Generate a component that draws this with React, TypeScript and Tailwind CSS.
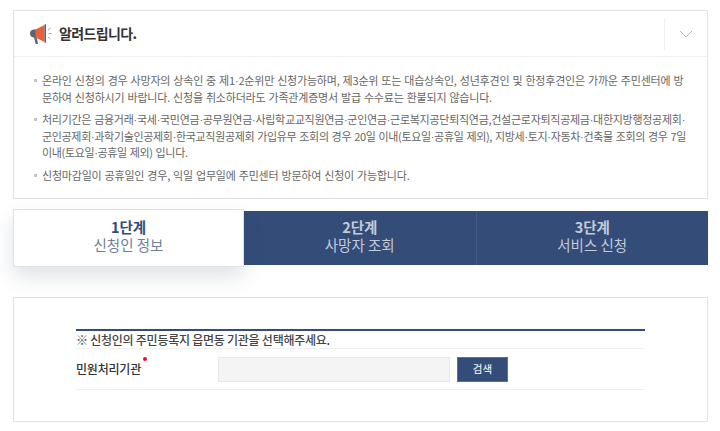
import React from 'react';

// broken by hand so each line ends on the same word as the original
const notices = [
    [
        { text: '온라인 신청의 경우 사망자의 상속인 중 제1·2순위만 신청가능하며, 제3순위 또는 대습상속인, 성년후견인 및 한정후견인은 가까운 주민센터에 방', cls: 'tracking-[-0.2px]' },
        { text: '문하여 신청하시기 바랍니다. 신청을 취소하더라도 가족관계증명서 발급 수수료는 환불되지 않습니다.', cls: 'tracking-[-0.2px]' },
    ],
    [
        { text: '처리기간은 금융거래·국세·국민연금·공무원연금·사립학교교직원연금·군인연금·근로복지공단퇴직연금,건설근로자퇴직공제금·대한지방행정공제회·', cls: 'tracking-[-0.28px]' },
        { text: '군인공제회·과학기술인공제회·한국교직원공제회 가입유무 조회의 경우 20일 이내(토요일·공휴일 제외), 지방세·토지·자동차·건축물 조회의 경우 7일', cls: 'tracking-[-0.33px]' },
        { text: '이내(토요일·공휴일 제외) 입니다.', cls: 'tracking-[-0.35px]' },
    ],
    [{ text: '신청마감일이 공휴일인 경우, 익일 업무일에 주민센터 방문하여 신청이 가능합니다.', cls: 'tracking-[-0.2px]' }],
];

const Megaphone = () => (
    <svg width="24" height="24" viewBox="0 0 24 24" className="shrink-0">
        <path d="M5 15 L7.5 15 L9 21.5 Q7.5 22.5 6.5 21.5 Z" fill="#5d6470" />
        <path d="M4.5 7.5 H7 V15.5 H4.5 Q1 15 1 11.5 Q1 8 4.5 7.5 Z" fill="#5d6470" />
        <path d="M6.5 7.5 L15.5 3 V20 L6.5 15.5 Z" fill="#e8603c" />
        <path d="M15.5 2.5 L17 2 V21 L15.5 20.5 Z" fill="#5d6470" />
        <path d="M19 8 L21.5 6 M19.5 11.5 H23 M19 15 L21.5 17" stroke="#a9adb3" strokeWidth="1" fill="none" />
    </svg>
);

// the middots sit tight against the words in the original
const Dots = ({ text }: { text: string }) => (
    <>
        {text.split('·').map((part, i) => (
            <React.Fragment key={i}>
                {i > 0 && <span className="font-['Liberation_Sans'] leading-[0]">·</span>}
                {part}
            </React.Fragment>
        ))}
    </>
);

const Step = ({ num, label }: { num: string; label: string }) => (
    <div className="flex flex-1 flex-col items-center justify-center border-r border-[#445c88] bg-[#334c78] pb-[4px] text-[#c3cbd9] last:border-r-0">
        <span className="text-[14.5px] leading-[18px] font-bold">{num}</span>
        <span className="text-[14.5px] leading-[18px]">{label}</span>
    </div>
);

export default function App() {
    return (
        <div
            className="h-[431px] w-[720px] overflow-hidden bg-white pt-[10px] pr-[12px] pl-[13px]"
            style={{ fontFamily: '"Noto Sans CJK KR", "Noto Sans", sans-serif' }}
        >
            <section className="h-[189px] border border-[#e2e2e2]">
                <div className="flex h-[46px] items-center justify-between border-b border-[#f0f0f0]">
                    <div className="flex items-center gap-[6px] pl-[15px]">
                        <Megaphone />
                        <h2 className="text-[14px] font-bold tracking-[-0.65px] text-[#333]">알려드립니다.</h2>
                    </div>
                    <div className="flex h-[32px] w-[43px] items-center justify-center border-l border-[#f0f0f0]">
                        <svg width="14" height="8" viewBox="0 0 14 8">
                            <path d="M1 1 L7 7 L13 1" stroke="#b5b5b5" strokeWidth="1" fill="none" />
                        </svg>
                    </div>
                </div>
                <ul className="flex flex-col gap-[6px] pt-[15px] pl-[28px] text-[11px] leading-[16.5px] [word-spacing:0.8px] text-[#666]">
                    {notices.map((lines) => (
                        <li key={lines[0].text} className="relative">
                            <span className="absolute top-[7px] left-[-8px] h-[3px] w-[3px] bg-[#c4c4c4]" />
                            {lines.map((line) => (
                                <span key={line.text} className={`block whitespace-nowrap ${line.cls}`}>
                                    <Dots text={line.text} />
                                </span>
                            ))}
                        </li>
                    ))}
                </ul>
            </section>

            <div className="mt-[12px] flex h-[54px]">
                <div className="relative z-10 my-[-2px] flex w-[231px] shrink-0 flex-col items-center justify-center border border-[#dde2ea] bg-white pb-[4px] shadow-[0_10px_20px_rgba(50,70,110,0.15)]">
                    <span className="text-[14.5px] leading-[18px] font-bold text-[#334c78]">1단계</span>
                    <span className="text-[14.5px] leading-[18px] text-[#6f7f99]">신청인 정보</span>
                </div>
                <Step num="2단계" label="사망자 조회" />
                <Step num="3단계" label="서비스 신청" />
            </div>

            <section className="mt-[32px] h-[125px] border border-[#e2e2e2] pt-[31px] pr-[62px] pl-[62px]">
                <div className="border-t-2 border-[#334c78]">
                    <p className="h-[18px] border-b border-[#f0f0f0] text-[12px] leading-[17px] font-medium tracking-[-0.25px] text-[#444]">
                        ※ 신청인의 주민등록지 읍면동 기관을 선택해주세요.
                    </p>
                    <div className="flex h-[41px] items-center border-b border-[#f0f0f0]">
                        <span className="relative w-[142px] shrink-0 text-[12px] font-medium tracking-[-0.2px] text-[#333]">
                            민원처리기관
                            <span className="absolute top-[-3px] left-[67px] h-[4px] w-[4px] rounded-full bg-[#e8112d]" />
                        </span>
                        <input className="h-[25px] w-[232px] border border-[#e8e8e8] bg-[#f4f4f4]" readOnly />
                        <button className="ml-[7px] h-[25px] w-[51px] border border-[#5a7099] bg-[#334c78] text-[10.5px] font-medium text-[#e4e8ef]">
                            검색
                        </button>
                    </div>
                </div>
            </section>
        </div>
    );
}
